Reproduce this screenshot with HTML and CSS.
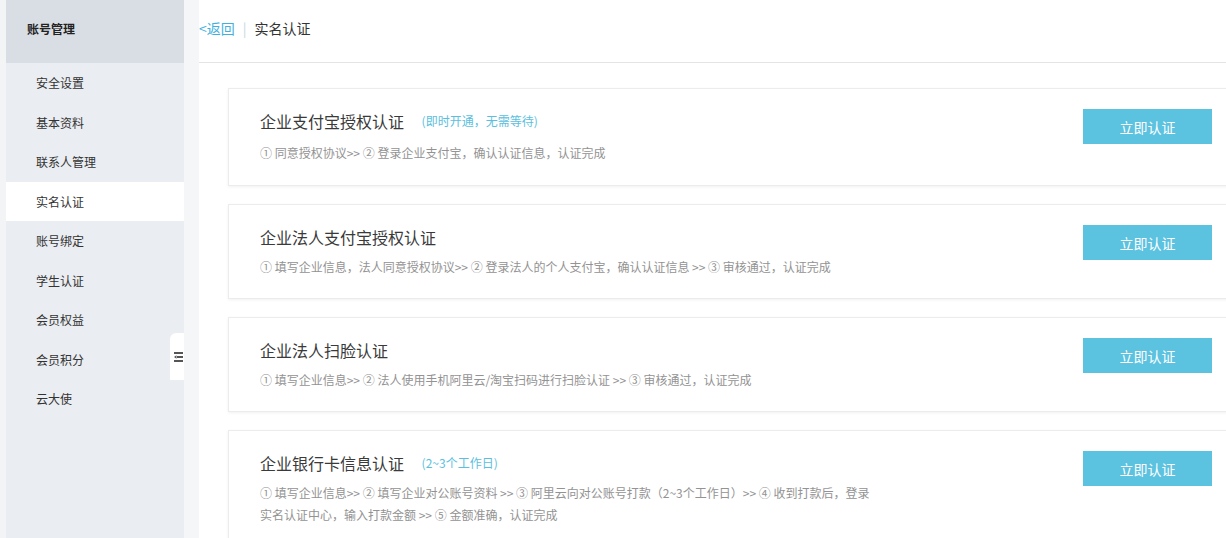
FILE: index.html
```html
<!DOCTYPE html>
<html lang="zh-CN">
<head>
    <meta charset="UTF-8">
    <title>实名认证</title>
    <link rel="stylesheet" href="styles.css">
</head>
<body>
<div class="page">
    <div class="gutter"></div>

    <!-- 左侧菜单 -->
    <aside class="sidebar">
        <div class="side-head">账号管理</div>
        <ul class="side-menu">
            <li>安全设置</li>
            <li>基本资料</li>
            <li>联系人管理</li>
            <li class="active">实名认证</li>
            <li>账号绑定</li>
            <li>学生认证</li>
            <li>会员权益</li>
            <li>会员积分</li>
            <li>云大使</li>
        </ul>
        <div class="side-toggle">
            <svg width="9" height="10" viewBox="0 0 9 10">
                <rect x="0" y="0" width="9" height="2" fill="#555"/>
                <rect x="3" y="4" width="6" height="2" fill="#555"/>
                <path d="M0 5 L2.5 3.3 L2.5 6.7 Z" fill="#555"/>
                <rect x="0" y="8" width="9" height="2" fill="#555"/>
            </svg>
        </div>
    </aside>
    <div class="strip"></div>

    <!-- 主体 -->
    <main class="main">
        <div class="topbar">
            <a class="back">&lt;返回</a>
            <span class="sep">|</span>
            <span class="crumb">实名认证</span>
        </div>

        <div class="cards">
            <div class="card first">
                <div class="card-body">
                    <div class="card-title">企业支付宝授权认证 <span class="tip">(即时开通，无需等待)</span></div>
                    <div class="card-steps">① 同意授权协议&gt;&gt; ② 登录企业支付宝，确认认证信息，认证完成</div>
                </div>
                <button class="btn">立即认证</button>
            </div>

            <div class="card">
                <div class="card-body">
                    <div class="card-title">企业法人支付宝授权认证</div>
                    <div class="card-steps">① 填写企业信息，法人同意授权协议&gt;&gt; ② 登录法人的个人支付宝，确认认证信息 &gt;&gt; ③ 审核通过，认证完成</div>
                </div>
                <button class="btn">立即认证</button>
            </div>

            <div class="card">
                <div class="card-body">
                    <div class="card-title">企业法人扫脸认证</div>
                    <div class="card-steps">① 填写企业信息&gt;&gt; ② 法人使用手机阿里云/淘宝扫码进行扫脸认证 &gt;&gt; ③ 审核通过，认证完成</div>
                </div>
                <button class="btn">立即认证</button>
            </div>

            <div class="card">
                <div class="card-body">
                    <div class="card-title">企业银行卡信息认证 <span class="tip">(2~3个工作日)</span></div>
                    <div class="card-steps">① 填写企业信息&gt;&gt; ② 填写企业对公账号资料 &gt;&gt; ③ 阿里云向对公账号打款（2~3个工作日）&gt;&gt; ④ 收到打款后，登录<br>实名认证中心，输入打款金额 &gt;&gt; ⑤ 金额准确，认证完成</div>
                </div>
                <button class="btn">立即认证</button>
            </div>
        </div>
    </main>
</div>
</body>
</html>
```

FILE: styles.css
```css
body {
    margin: 0;
    font-family: "Noto Sans CJK SC", "Liberation Sans", sans-serif;
    background-color: #fff;
    color: #333;
    overflow: hidden;
}

.page {
    display: flex;
    height: 538px;
}

.gutter {
    width: 6px;
    background-color: #f3f4f6;
}

.sidebar {
    position: relative;
    width: 178px;
    background-color: #eaedf1;
}

.side-head {
    height: 63px;
    line-height: 58px;
    padding-left: 21px;
    background-color: #d9dee4;
    font-size: 12px;
    font-weight: bold;
    color: #222;
}

.side-menu {
    list-style: none;
    margin: 0;
    padding: 0;
}

.side-menu li {
    height: 39.5px;
    line-height: 39px;
    padding-left: 30px;
    font-size: 12px;
    color: #333;
}

.side-menu li.active {
    background-color: #fff;
}

.side-toggle {
    position: absolute;
    right: 0;
    top: 333px;
    width: 14px;
    height: 47px;
    background-color: #fff;
    border-radius: 6px 0 0 0;
    display: flex;
    align-items: center;
    justify-content: center;
}

.side-toggle svg {
    margin-left: 2px;
}

.strip {
    width: 15px;
    background-color: #f5f6f7;
}

.main {
    flex: 1;
    overflow: hidden;
}

.topbar {
    height: 63px;
    border-bottom: 1px solid #e4e4e4;
    display: flex;
    align-items: center;
    padding-bottom: 6px;
    box-sizing: border-box;
    font-size: 14px;
}

.back {
    color: #3fb0e0;
    cursor: pointer;
}

.sep {
    color: #c8d6de;
    margin: 0 8px 0 8px;
}

.crumb {
    color: #333;
}

.cards {
    padding: 25px 0 0 29px;
}

.card {
    width: 1010px;
    display: flex;
    justify-content: space-between;
    align-items: flex-start;
    border: 1px solid #ececec;
    box-shadow: 0 1px 3px rgba(0, 0, 0, 0.06);
    margin-bottom: 18px;
    padding: 0 25px 20px 31px;
    box-sizing: border-box;
}

.card-body {
    padding-top: 23px;
}

.card-title {
    font-size: 16px;
    line-height: 18px;
    color: #3a3a3a;
}

.tip {
    font-size: 12px;
    color: #5bc0de;
    margin-left: 14px;
    vertical-align: 2px;
}

.card-steps {
    margin-top: 10px;
    font-size: 12px;
    line-height: 22px;
    color: #939393;
}

.card.first .card-steps {
    margin-top: 12px;
}

.card.first {
    padding-bottom: 21px;
}

.btn {
    margin-top: 20px;
    width: 129px;
    height: 35px;
    border: none;
    background-color: #5bc2e0;
    color: #fff;
    font-family: inherit;
    font-size: 14px;
    cursor: pointer;
}
```
